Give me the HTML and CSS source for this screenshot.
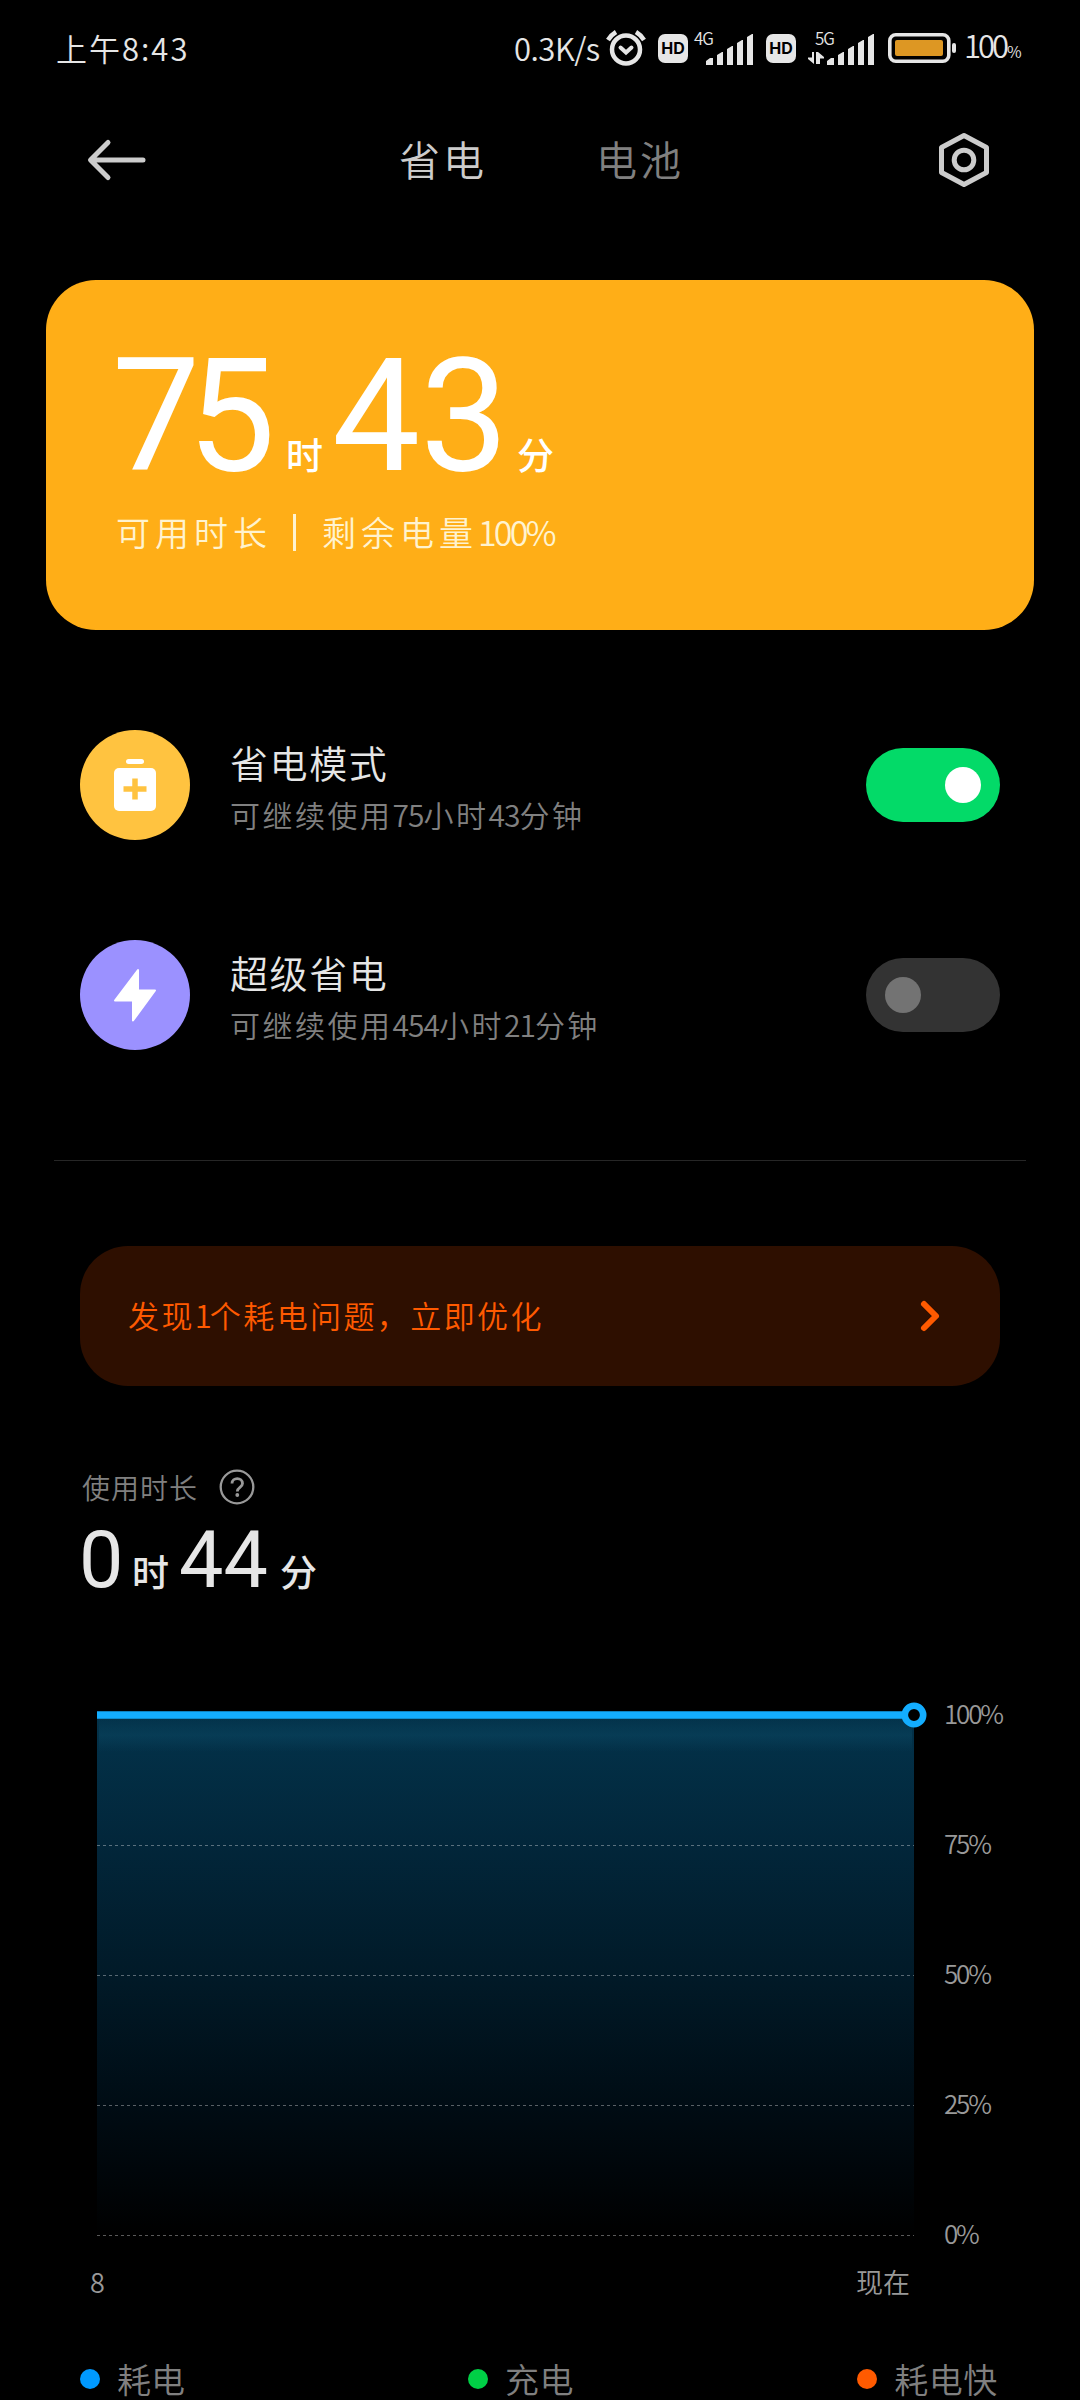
FILE: index.html
```html
<!DOCTYPE html>
<html lang="zh-CN">
<head>
    <meta charset="UTF-8">
    <meta name="viewport" content="width=device-width, initial-scale=1.0">
    <title>省电与电池</title>
    <link rel="stylesheet" href="styles.css">
</head>
<body>
    <div class="status-bar">
        <span class="time">上午8:43</span>
        <div class="status-right">
            <span class="speed">0.3K/s</span>
            <svg class="alarm" width="40" height="38" viewBox="0 0 40 38" fill="none" stroke="#e6e6e6">
                <circle cx="20" cy="20.500" r="14" stroke-width="4.500"/>
                <path d="M2 11Q5 6 10 3M38 11Q35 6 30 3" stroke-width="4.500"/>
                <path d="M14.500 18.500l5.500 5 5.500-5" stroke-width="4" stroke-linecap="round"/>
            </svg>
            <span class="hd">HD</span>
            <div class="signal">
                <span class="net">4G</span>
                <svg width="48" height="32" viewBox="0 0 48 32" fill="#e6e6e6">
                    <path d="M0 31v-4l4-3h3v7zM11 31V21l5-3h1v13zM21 31V15l5-3h1v19zM31 31V9l5-3h1v25zM41 31V3l5-3h1v31z"/>
                </svg>
            </div>
            <span class="hd hd-second">HD</span>
            <div class="signal signal-5g">
                <span class="net">5G</span>
                <svg class="arrows" width="16" height="12" viewBox="0 0 16 12" fill="#e6e6e6">
                    <path d="M4 0h2v12L0 7V5.500h4zM10 12H8V0h2l6 5v1.500h-4V12z"/>
                </svg>
                <svg width="48" height="32" viewBox="0 0 48 32" fill="#e6e6e6">
                    <path d="M0 31v-4l4-3h3v7zM11 31V21l5-3h1v13zM21 31V15l5-3h1v19zM31 31V9l5-3h1v25zM41 31V3l5-3h1v31z"/>
                </svg>
            </div>
            <svg class="battery" width="69" height="30" viewBox="0 0 69 30">
                <rect x="1.800" y="1.800" width="59" height="26.400" rx="6" fill="none" stroke="#e6e6e6" stroke-width="3.600"/>
                <rect x="7" y="7" width="48" height="16" rx="2" fill="#dd9723"/>
                <rect x="64" y="10" width="4" height="10" rx="2" fill="#e6e6e6"/>
            </svg>
            <span class="level">100<small>%</small></span>
        </div>
    </div>

    <div class="header">
        <svg width="60" height="44" viewBox="0 0 60 44" fill="none" stroke="#cccccc" stroke-width="5" stroke-linecap="round" stroke-linejoin="round">
            <path d="M57 22H5M22 4.500L4.500 22 22 39.500"/>
        </svg>
        <div class="tabs">
            <span class="tab active">省电</span>
            <span class="tab">电池</span>
        </div>
        <svg width="54" height="58" viewBox="0 0 54 58" fill="none" stroke="#cccccc" stroke-width="5" stroke-linejoin="round">
            <path d="M27 4.500L49.500 16.500v25L27 53.500 4.500 41.500v-25z"/>
            <circle cx="27" cy="29" r="9.800"/>
        </svg>
    </div>

    <div class="card">
        <div class="card-time">
            <span class="big">75</span><span class="unit">时</span><span class="big big-minutes">43</span><span class="unit">分</span>
        </div>
        <div class="card-sub"><span>可用时长</span><i></i><span>剩余电量<b>100%</b></span></div>
    </div>

    <div class="modes">
        <div class="mode">
            <svg class="mode-icon" width="110" height="110" viewBox="0 0 110 110">
                <circle cx="55" cy="55" r="55" fill="#ffc340"/>
                <rect x="46" y="29" width="18" height="5" rx="2.500" fill="#fff"/>
                <rect x="34" y="38" width="42" height="43" rx="5" fill="#fff"/>
                <path d="M55 48.500v21M43.500 59h23" stroke="#ffc340" stroke-width="5.500"/>
            </svg>
            <div class="mode-text">
                <div class="mode-title">省电模式</div>
                <div class="mode-desc">可继续使用<b>75</b>小时<b>43</b>分钟</div>
            </div>
            <div class="toggle on"></div>
        </div>
        <div class="mode">
            <svg class="mode-icon" width="110" height="110" viewBox="0 0 110 110">
                <circle cx="55" cy="55" r="55" fill="#9b91ff"/>
                <path d="M58 30v20.500h17L53 80.500V60.500H35z" fill="#fff" stroke="#fff" stroke-width="2" stroke-linejoin="round"/>
            </svg>
            <div class="mode-text">
                <div class="mode-title">超级省电</div>
                <div class="mode-desc">可继续使用<b>454</b>小时<b>21</b>分钟</div>
            </div>
            <div class="toggle"></div>
        </div>
    </div>

    <div class="divider"></div>

    <div class="banner">
        <span>发现<b>1</b>个耗电问题，立即优化</span>
        <svg width="22" height="34" viewBox="0 0 22 34" fill="none" stroke="#ff5a00" stroke-width="6" stroke-linecap="round" stroke-linejoin="round">
            <path d="M5 5l12 12L5 29"/>
        </svg>
    </div>

    <div class="usage">
        <div class="usage-label">
            <span>使用时长</span>
            <svg width="36" height="36" viewBox="0 0 36 36" fill="none" stroke="#999999">
                <circle cx="18" cy="18" r="16.300" stroke-width="2.300"/>
                <path d="M13 14.500c0-6.500 10.500-6.500 10.500 0 0 4-5.200 3.800-5.200 8" stroke-width="2.800"/>
                <circle cx="18.300" cy="26" r="1.900" fill="#999999" stroke="none"/>
            </svg>
        </div>
        <div class="usage-time">
            <span class="mid zero">0</span><span class="unit">时</span><span class="mid">44</span><span class="unit">分</span>
        </div>
    </div>

    <div class="chart">
        <div class="plot">
            <svg width="840" height="600" viewBox="0 0 840 600">
                <defs>
                    <linearGradient id="area" x1="0" y1="0" x2="0" y2="1">
                        <stop offset="0" stop-color="#03334b"/>
                        <stop offset="0.250" stop-color="#02263a"/>
                        <stop offset="0.500" stop-color="#011a28"/>
                        <stop offset="0.750" stop-color="#000c14"/>
                        <stop offset="1" stop-color="#000000"/>
                    </linearGradient>
                    <linearGradient id="glow" x1="0" y1="0" x2="0" y2="1">
                        <stop offset="0" stop-color="#0b4762" stop-opacity="0"/>
                        <stop offset="0.500" stop-color="#0b4762" stop-opacity="0.500"/>
                        <stop offset="1" stop-color="#0b4762" stop-opacity="0"/>
                    </linearGradient>
                </defs>
                <rect x="0" y="65" width="817" height="520" fill="url(#area)"/>
                <rect x="2" y="68" width="813" height="34" fill="url(#glow)"/>
                <path d="M0 195.500h817M0 325.500h817M0 455.500h817M0 585.500h817" stroke="#ffffff" stroke-opacity="0.350" stroke-dasharray="3 3"/>
                <path d="M0 65h817" stroke="#13adff" stroke-width="7.400"/>
                <circle cx="817" cy="65" r="9.200" fill="#000" stroke="#13adff" stroke-width="6.600"/>
            </svg>
            <div class="x-axis"><span>8</span><span class="now">现在</span></div>
        </div>
        <div class="y-axis">
            <span>100%</span>
            <span>75%</span>
            <span>50%</span>
            <span>25%</span>
            <span>0%</span>
        </div>
    </div>

    <div class="legend">
        <div class="legend-item"><i class="dot blue"></i>耗电</div>
        <div class="legend-item"><i class="dot green"></i>充电</div>
        <div class="legend-item"><i class="dot orange"></i>耗电快</div>
    </div>
</body>
</html>
```
FILE: styles.css
```css
* {
    margin: 0;
    padding: 0;
    box-sizing: border-box;
}

html, body {
    width: 1080px;
    height: 2400px;
    overflow: hidden;
}

body {
    background-color: #000;
    color: #e6e6e6;
    font-family: "Noto Sans CJK SC", sans-serif;
    font-weight: 350;
}

svg {
    display: block;
    flex: none;
}

span {
    white-space: nowrap;
}

b, i {
    font-weight: inherit;
    font-style: normal;
}

/* status bar */
.status-bar {
    height: 96px;
    padding: 0 57px 0 56px;
    display: flex;
    justify-content: space-between;
    align-items: center;
}

.time {
    font-size: 31px;
    line-height: 40px;
    letter-spacing: 2px;
}

.status-right {
    width: 508px;
    display: flex;
    align-items: center;
}

.speed {
    width: 92px;
    flex: none;
    margin-left: -1px;
    font-size: 31px;
    line-height: 40px;
    letter-spacing: -0.5px;
}

.hd {
    width: 30px;
    height: 29px;
    flex: none;
    margin-left: 12px;
    border-radius: 7px;
    background-color: #e6e6e6;
    color: #000;
    font: bold 16px/29px Inter, sans-serif;
    text-align: center;
}

.signal {
    width: 60px;
    height: 36px;
    flex: none;
    margin: 0 12px 0 6px;
    display: flex;
    align-items: flex-end;
    justify-content: flex-end;
    position: relative;
}

.hd-second {
    margin-left: 0;
}

.signal-5g {
    width: 67px;
    margin: 0 13px 0 12px;
}

.net {
    position: absolute;
    top: 0;
    left: 0;
    font-size: 17px;
    line-height: 16px;
    letter-spacing: -1px;
}

.signal-5g .net {
    left: 7px;
}

.arrows {
    margin-right: 3px;
    margin-bottom: 2px;
}

.level {
    margin-left: 7px;
    font-size: 31px;
    line-height: 40px;
    letter-spacing: -3px;
}

.level small {
    margin-left: 1px;
    font-size: 16px;
}

/* title row */
.header {
    height: 128px;
    padding: 0 89px 0 86px;
    display: flex;
    justify-content: space-between;
    align-items: center;
}

.tabs {
    width: 285px;
    margin-top: -5px;
    display: flex;
    justify-content: space-between;
}

.tab {
    font-size: 41px;
    line-height: 56px;
    letter-spacing: 3px;
    color: #808080;
}

.tab.active {
    color: #cccccc;
}

/* remaining time card */
.card {
    height: 350px;
    margin: 56px 46px 0;
    padding: 58px 68px 0;
    border-radius: 50px;
    background-color: #ffae17;
    color: #fff;
}

.card-time, .usage-time {
    display: flex;
    align-items: baseline;
}

.big, .mid {
    font-family: Roboto, sans-serif;
    font-weight: 400;
    font-size: 157px;
    line-height: 157px;
}

.big {
    width: 174px;
    margin-left: -2px;
    letter-spacing: -13px;
}

.big-minutes {
    width: 185px;
    margin-left: 9px;
    letter-spacing: 0;
}

.unit {
    font-size: 37px;
    line-height: 40px;
    font-weight: 500;
}

.card-sub {
    margin: 12px 0 0 2px;
    display: flex;
    align-items: center;
    font-size: 34px;
    line-height: 50px;
    letter-spacing: 5px;
    color: #fff3cf;
}

.card-sub i {
    width: 3px;
    height: 37px;
    margin: 0 26px 0 21px;
    background-color: #fff3cf;
}

.card-sub b {
    letter-spacing: -2.8px;
}

/* mode switches */
.modes {
    margin-top: 50px;
    padding: 0 80px;
}

.mode {
    height: 210px;
    display: flex;
    align-items: center;
}

.mode-text {
    flex: 1;
    padding: 4px 0 0 40px;
}

.mode-title {
    font-size: 38px;
    line-height: 54px;
    letter-spacing: 1.6px;
}

.mode-desc {
    font-size: 30px;
    line-height: 50px;
    letter-spacing: 2.5px;
    color: #808080;
}

.mode-desc b {
    letter-spacing: -1px;
}

.toggle {
    width: 134px;
    height: 74px;
    padding: 19px;
    border-radius: 37px;
    background-color: #333333;
    display: flex;
}

.toggle::after {
    content: "";
    width: 36px;
    height: 36px;
    border-radius: 50%;
    background-color: #737373;
}

.toggle.on {
    justify-content: flex-end;
    background-color: #03da68;
}

.toggle.on::after {
    background-color: #fff;
}

.divider {
    height: 1px;
    margin: 60px 54px 0;
    background-color: #262626;
}

/* power issue banner */
.banner {
    height: 140px;
    margin: 85px 80px 0;
    padding: 0 59px 0 48px;
    border-radius: 48px;
    background-color: #2e0f00;
    color: #ff5a00;
    font-size: 31px;
    letter-spacing: 2.4px;
    display: flex;
    justify-content: space-between;
    align-items: center;
}

.banner span {
    margin-top: -4px;
}

.banner b {
    letter-spacing: -2px;
}

/* usage time */
.usage {
    margin-top: 76px;
    padding: 0 82px;
    height: 188px;
}

.usage-label {
    height: 50px;
    display: flex;
    align-items: center;
    gap: 21px;
    font-size: 28px;
    letter-spacing: 1px;
    color: #808080;
}

.mid {
    margin: 0 0 0 10px;
    width: 101px;
    font-size: 79px;
    line-height: 79px;
}

.mid.zero {
    margin: 0 0 0 -3px;
    width: 53px;
}

.usage-time {
    margin-top: 9px;
}

/* battery level chart */
.chart {
    height: 650px;
    padding-left: 97px;
    display: flex;
}

.plot {
    width: 840px;
}

.x-axis {
    width: 820px;
    height: 62px;
    margin-left: -7px;
    display: flex;
    justify-content: space-between;
    align-items: center;
    font-size: 27px;
    color: #999999;
}

.y-axis {
    padding-left: 7px;
    margin-top: -2px;
    display: flex;
    flex-direction: column;
    font-size: 26px;
    line-height: 130px;
    letter-spacing: -2.2px;
    color: #999999;
}

.legend {
    height: 60px;
    margin-top: 49px;
    padding: 0 82px 0 80px;
    display: flex;
    justify-content: space-between;
    align-items: center;
    font-size: 34px;
    color: #808080;
}

.legend-item {
    display: flex;
    align-items: center;
    line-height: 60px;
}

.legend-item:nth-child(n + 2) {
    margin-left: -2px;
    letter-spacing: 0.6px;
}

.dot {
    width: 20px;
    height: 20px;
    margin-right: 17px;
    border-radius: 50%;
}

.blue {
    background-color: #0099ff;
}

.green {
    background-color: #00cf46;
}

.orange {
    background-color: #ff5a00;
}
```
